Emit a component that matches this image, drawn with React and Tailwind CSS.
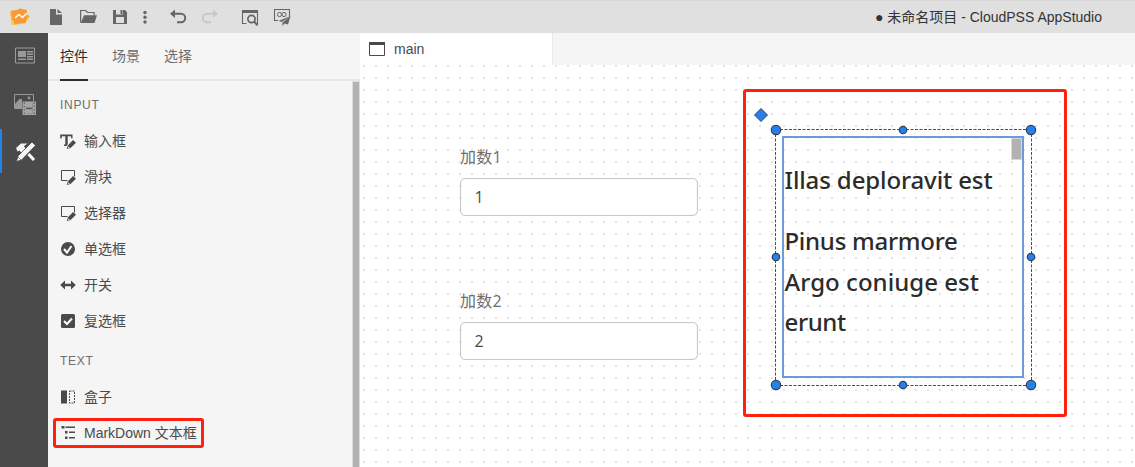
import React from "react";

const UI = "font-['Liberation_Sans','Noto_Sans_CJK_SC',sans-serif]";

function Tool({ children, className = "w-8" }) {
  return (
    <svg className={`h-[33px] shrink-0 ${className}`} viewBox="0 0 32 33" fill="#666" preserveAspectRatio="xMidYMid meet">
      {children}
    </svg>
  );
}

function Toolbar() {
  return (
    <header className="flex h-[33px] shrink-0 items-center border-t border-[#d8d8d8] bg-[#e0e0e0]">
      <div className="-mt-px flex">
        <svg className="h-[33px] w-10" viewBox="0 0 40 33">
          <path d="M10 12l3-1 2 13-3 1z M12 21l2 4 12-2-2-3z" fill="#fbb829" />
          <path d="M25 13.500l5 2.500-5 7-4 .5z" fill="#fdb21c" />
          <path d="M11 10.500q6 .5 9-2l7 1.500-1 12.500-12 1.500z" fill="#fa9838" />
          <path d="M15 18l4-3.500 3.500 3 4-4" fill="none" stroke="#fff" strokeWidth="1.500" />
        </svg>
        <Tool>
          <path d="M10 9h6v5.500h6V25H10z M17.500 9l4.500 4h-4.500z" />
        </Tool>
        <Tool>
          <path d="M8.600 22.500v-12h5l2 2h6.500v3" fill="none" stroke="#666" strokeWidth="1.200" />
          <path d="M12 15.200h13L22.500 23H8.800z" />
        </Tool>
        <Tool>
          <path fillRule="evenodd" d="M9 10h12l2 2v12H9z M12 10v4.500h7V10z M12 17v6h8v-6z" />
          <path d="M16.500 10h2v4h-2z" />
        </Tool>
        <svg className="h-[33px] w-[18px]" viewBox="0 0 18 33" fill="#666">
          <circle cx="9" cy="12.500" r="1.700" />
          <circle cx="9" cy="17.300" r="1.700" />
          <circle cx="9" cy="22" r="1.700" />
        </svg>
        <Tool className="ml-2 w-8">
          <path d="M10 13.800h9a4.200 4.200 0 0 1 0 8.400h-4" fill="none" stroke="#666" strokeWidth="2" />
          <path d="M8 13.800l5-4.300v8.600z" />
        </Tool>
        <Tool>
          <path d="M22 13.800h-9a4.200 4.200 0 0 0 0 8.400h4" fill="none" stroke="#c8c8c8" strokeWidth="2" />
          <path d="M24 13.800l-5-4.300v8.600z" fill="#c8c8c8" />
        </Tool>
        <Tool className="ml-2 w-8">
          <path d="M8 10h16v3H8z" />
          <path d="M12.500 23.500h-4v-12 M23.500 12v12" fill="none" stroke="#666" strokeWidth="1.100" />
          <circle cx="17.500" cy="19" r="3.600" fill="none" stroke="#666" strokeWidth="1.700" />
          <path d="M20 21.500l3.500 3.700" stroke="#666" strokeWidth="2" />
        </Tool>
        <Tool>
          <path d="M12 20.500H8.500v-11h15v7" fill="none" stroke="#666" strokeWidth="1.100" />
          <circle cx="13.500" cy="14.500" r="2.100" fill="none" stroke="#666" />
          <circle cx="18" cy="14.500" r="2.100" fill="none" stroke="#666" />
          <path d="M24.500 16L12.500 21l3.200 1zM24.500 16l-8 6.500v3.500l2-2.500 3.500 1z" />
        </Tool>
      </div>
      <div className={`ml-auto mr-[33px] whitespace-nowrap text-sm text-[#333] ${UI}`}>
        ● 未命名项目 - CloudPSS AppStudio
      </div>
    </header>
  );
}

function ActivityBar() {
  return (
    <nav className="flex w-12 shrink-0 flex-col bg-[#4a4a4a]">
      <svg className="h-12 w-12" viewBox="0 0 48 48">
        <path d="M15.500 15h19v15h-19z" fill="none" stroke="#9b9b9b" />
        <path d="M18 18h8v6h-8z M18 25.500h8v1.500h-8z M27 18h6v1.500h-6z M27 20.500h6V22h-6z M27 23h6v1.500h-6z M27 25.500h6V27h-6z" fill="#999" />
      </svg>
      <svg className="h-12 w-12" viewBox="0 0 48 48">
        <path d="M22 27.500h-7.500v-14h19V20" fill="none" stroke="#999" />
        <path d="M15 27v-4l4.500-5h2.500v9z" fill="#999" />
        <circle cx="29" cy="17" r="1.400" fill="#999" />
        <path fillRule="evenodd" d="M22.500 20.500H36V34H22.500z M26 22v4.300h6.500V22z M26 28.300v4h6.500v-4z" fill="#a5a5a5" />
        <path d="M26 22h6.500v4.300H26z M26 28.300h6.500v4H26z" fill="#a5a5a5" />
        <path d="M26 27.300h6.500" stroke="#4a4a4a" />
        <path d="M24.300 21.500v12 M34.300 21.500v12" stroke="#5a5a5a" strokeDasharray="1.500 1.800" />
      </svg>
      <div className="flex h-11 border-l-2 border-[#2680eb]">
        <svg className="h-11 w-[46px]" viewBox="2 0 46 44">
          <path d="M16 19l5-4.500h6.500L24 17l2 4-4 3.500-2.500-3-2 1z" fill="#f5f5f5" />
          <path d="M28.500 25l5.500 6" stroke="#f5f5f5" strokeWidth="3.200" />
          <path d="M16.500 32.500l1.500-5.500L32 13l3.500 3.500L21.500 31z" fill="#f5f5f5" stroke="#4a4a4a" strokeWidth=".8" />
          <path d="M17.500 27.500l4 4" stroke="#4a4a4a" strokeWidth=".6" />
        </svg>
      </div>
    </nav>
  );
}

const pen = (
  <>
    <path d="M5.500 16.500l1.500-4.500 6-6 3.500 3.500-7 7z" fill="#f5f5f5" />
    <path d="M6.700 16l1.100-3.600L13 7l3 2.800-5.500 5.200z" fill="#4a4a4a" />
    <path d="M8.300 13.200l1.700 1.500-2.300.6z" fill="#ccc" />
  </>
);

const frame = (
  <>
    <path d="M8 11.500H1.500v-10h13V8" fill="none" stroke="#4a4a4a" />
    {pen}
  </>
);

const glyphs = {
  input: (
    <>
      <path d="M.2 1.500h12.300v4h-1.200L11 3.300H7.700v8.200H9V13H4v-1.500h1.300V3.300H2L1.500 5.500H.2z" fill="#4a4a4a" />
      {pen}
    </>
  ),
  frame,
  radio: (
    <>
      <circle cx="8" cy="8" r="7" fill="#4a4a4a" />
      <path d="M4 8l3 3.500L11.500 5" fill="none" stroke="#fff" strokeWidth="2" />
    </>
  ),
  toggle: <path d="M.2 8L5 3.500v3.200h6V3.500L15.800 8 11 12.500V9.300H5v3.200z" fill="#4a4a4a" />,
  check: (
    <>
      <rect x="1" y="1" width="14" height="14" rx="1.500" fill="#4a4a4a" />
      <path d="M4 8l3 3 5-5.500" fill="none" stroke="#fff" strokeWidth="2" />
    </>
  ),
  box: (
    <>
      <path d="M1 1.500h6v13H1z" fill="#4a4a4a" />
      <path d="M9.500 2h5v12h-5z" fill="none" stroke="#4a4a4a" strokeDasharray="2 1" />
    </>
  ),
  tree: (
    <path d="M1.500 1h3v2.500h-3z M5.500 1.500H15V3H5.500z M5 6h2.500v2.500H5z M9 6.500h6V8H9z M5 11.500h2.500V14H5z M9 12h6v1.500H9z" fill="#4a4a4a" />
  ),
};

function Control({ icon, children }) {
  return (
    <li className="flex h-9 items-center gap-2 pl-3">
      <svg className="size-4 shrink-0" viewBox="0 0 16 16">{glyphs[icon]}</svg>
      <span className="whitespace-nowrap">{children}</span>
    </li>
  );
}

function ControlPanel() {
  return (
    <aside className={`flex w-[312px] shrink-0 flex-col bg-[#f5f5f5] text-sm text-[#4a4a4a] ${UI}`}>
      <div className="flex h-12 shrink-0 gap-6 border-b-2 border-[#e8e8e8] pl-3 text-[#6e6e6e]">
        <div className="h-12 border-b-2 border-[#2c2c2c] leading-[46px] text-[#2c2c2c]">控件</div>
        <div className="leading-[46px]">场景</div>
        <div className="leading-[46px]">选择</div>
      </div>
      <div className="flex min-h-0 grow">
        <div className="grow">
          <h2 className="h-[42px] pl-3 text-xs leading-[49px] tracking-[0.7px] text-[#6e6e6e]">INPUT</h2>
          <ul>
            <Control icon="input">输入框</Control>
            <Control icon="frame">滑块</Control>
            <Control icon="frame">选择器</Control>
            <Control icon="radio">单选框</Control>
            <Control icon="toggle">开关</Control>
            <Control icon="check">复选框</Control>
          </ul>
          <h2 className="h-10 pl-3 text-xs leading-[45px] tracking-[0.7px] text-[#6e6e6e]">TEXT</h2>
          <ul>
            <Control icon="box">盒子</Control>
            <div className="relative">
              <Control icon="tree">MarkDown 文本框</Control>
              <div className="absolute left-[5px] top-[3px] h-[30px] w-[151px] rounded-[3px] border-[3px] border-[#ff2010]" />
            </div>
          </ul>
        </div>
        <div className="w-2 bg-[#dcdcdc] px-px pt-px">
          <div className="h-full bg-[#b2b2b2]" />
        </div>
      </div>
    </aside>
  );
}

function Field({ label, value, className }) {
  return (
    <div className={`absolute left-[100px] w-[238px] font-['Open_Sans','Noto_Sans_CJK_SC',sans-serif] text-base ${className}`}>
      <div className="h-[33px] leading-[24px] tracking-[0.3px] text-[#6e6e6e]">{label}</div>
      <div className="h-[38px] rounded-[5px] border border-[#c8c8c8] bg-white pl-[13.5px] leading-[36px] text-[#4a4a4a] shadow-[inset_0_0_1px_#ccc]">{value}</div>
    </div>
  );
}

const handles = [
  [416, 65, 5], [543, 65, 4], [671, 65, 5],
  [416, 192, 4], [671, 192, 4],
  [416, 320, 5], [543, 320, 4], [671, 320, 5],
];

function Canvas() {
  return (
    <div className="relative grow overflow-hidden bg-white">
      <svg className="absolute inset-0 h-full w-full">
        <defs>
          <pattern id="dots" width="12" height="12" patternUnits="userSpaceOnUse">
            <rect x="3" y="0" width="2" height="2" fill="#e4e4e4" />
          </pattern>
        </defs>
        <rect width="100%" height="100%" fill="url(#dots)" />
      </svg>
      <Field label="加数1" value="1" className="top-20" />
      <Field label="加数2" value="2" className="top-56" />
      <div className="absolute left-[383px] top-[24px] h-[328px] w-[324px] rounded-[3px] border-[3px] border-[#ff2010]" />
      <div className="absolute left-[422px] top-[71px] h-[242px] w-[242px] border-2 border-[#6c9add] pl-[0.5px] font-['Noto_Sans','Open_Sans',sans-serif] text-2xl font-medium text-[#2c2c2c]">
        <div className="absolute right-0 top-0 h-[22px] w-[11px] border border-[#d8d8d8] bg-[#b2b2b2]" />
        <h3 className="mt-[22px] whitespace-nowrap leading-10"><span className="tracking-[-0.12px]">Illas deploravit est</span></h3>
        <h3 className="mt-[21px] whitespace-nowrap leading-[40.500px]">
          <span className="tracking-[-0.27px]">Pinus marmore</span><br />
          <span className="tracking-[0.03px]">Argo coniuge est</span><br />
          <span className="tracking-[-0.4px]">erunt</span>
        </h3>
      </div>
      <svg className="absolute inset-0 h-full w-full">
        <path d="M415.500 64.500H671.500 M415.500 320.500H671.500 M415.500 64.500V320.500 M671.500 64.500V320.500" fill="none" stroke="#1058b8" strokeDasharray="3 1.500" />
        {handles.map(([x, y, r]) => (
          <circle key={`${x}-${y}`} cx={x} cy={y} r={r - 0.3} fill="#2680eb" stroke="#2f4358" strokeWidth="1.200" />
        ))}
        <path d="M401 43.500l6.500 6.500-6.500 6.500-6.500-6.500z" fill="#2680eb" stroke="#2f4358" />
      </svg>
    </div>
  );
}

export default function App() {
  return (
    <div className="flex h-[467px] w-[1135px] flex-col overflow-hidden">
      <Toolbar />
      <div className="flex min-h-0 grow">
        <ActivityBar />
        <ControlPanel />
        <main className="flex min-w-0 grow flex-col">
          <div className="flex h-8 shrink-0 bg-[#f5f5f5]">
            <div className={`flex w-[193px] items-center gap-[9px] border-r border-[#e8e8e8] bg-white pl-[9px] text-sm text-[#4a4a4a] ${UI}`}>
              <svg className="size-4" viewBox="0 0 16 16">
                <path d="M.5 1.500h15v13H.5z" fill="none" stroke="#4a4a4a" />
                <path d="M0 1h16v3H0z" fill="#4a4a4a" />
              </svg>
              main
            </div>
          </div>
          <Canvas />
        </main>
      </div>
    </div>
  );
}
